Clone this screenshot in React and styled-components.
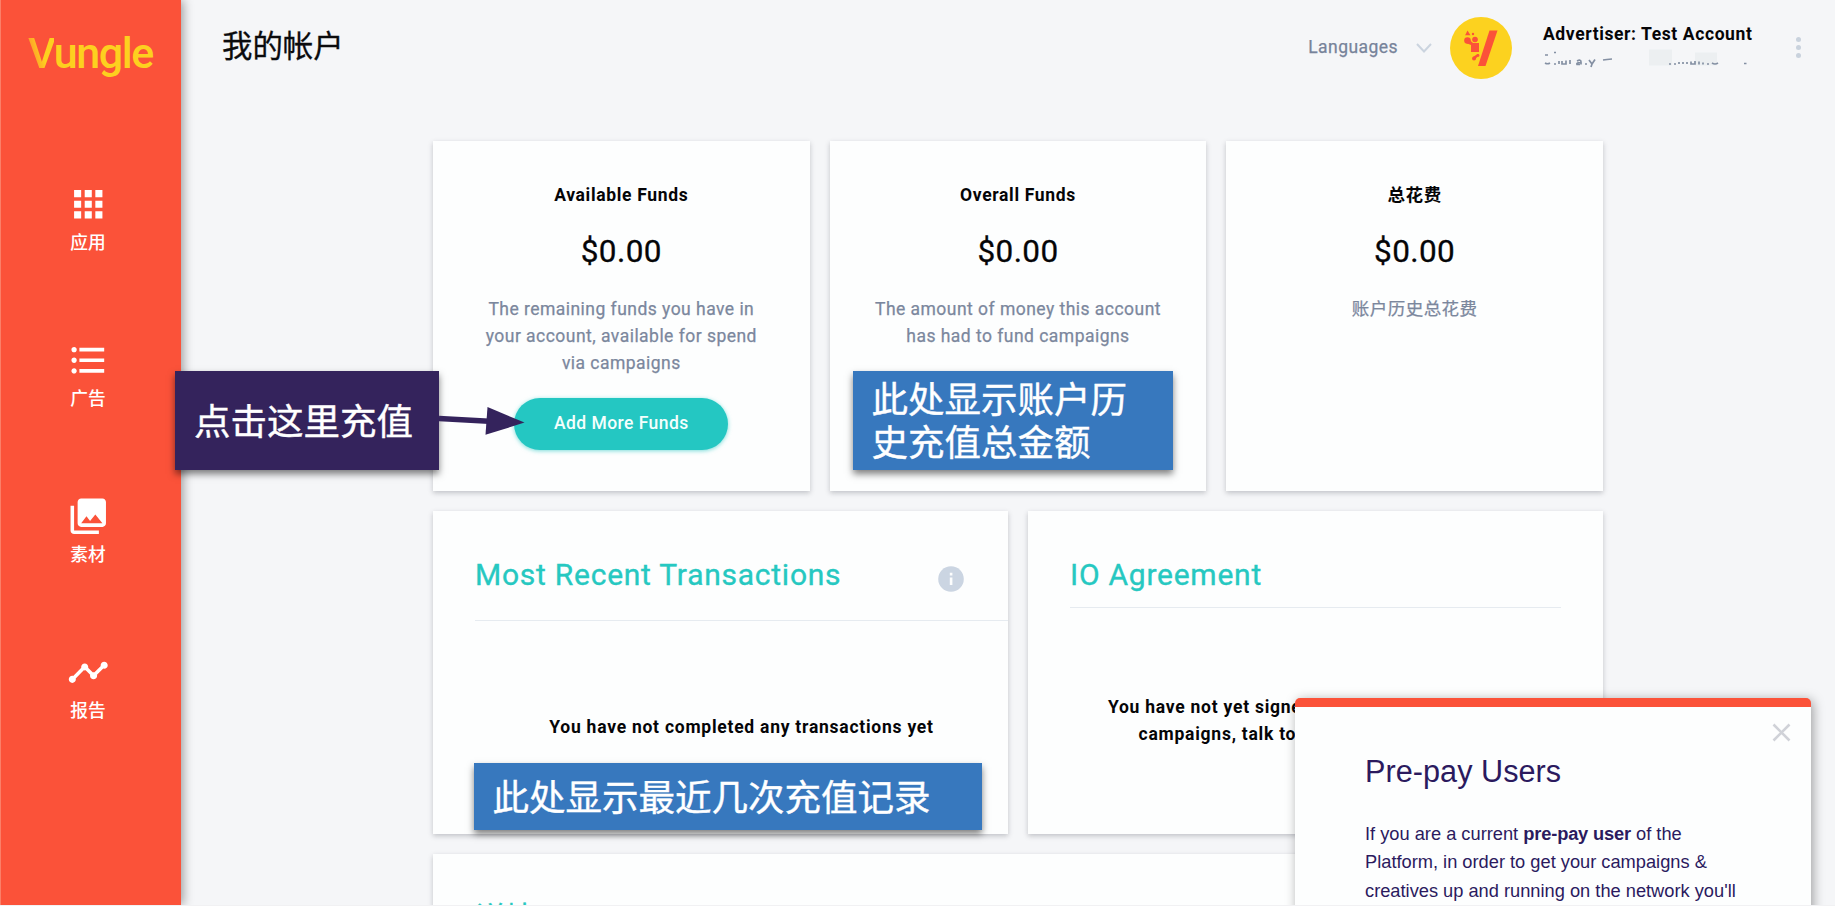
import React from 'react';
import styled, { createGlobalStyle } from 'styled-components';
import { MdApps, MdFormatListBulleted, MdCollections, MdTimeline } from 'react-icons/md';

const GlobalStyle = createGlobalStyle`
  * { box-sizing: border-box; }
  body {
    margin: 0;
    background: #f1f1f3;
    font-family: Roboto, "Noto Sans CJK SC", sans-serif;
    overflow: hidden;
  }
  h1, h2, h3, p { margin: 0; font-weight: 400; }
`;

const Shell = styled.div`
  position: relative;
  display: flex;
  width: 1835px;
  height: 905px;
  overflow: hidden;
  background: #f5f6f8;
`;

const Sidebar = styled.aside`
  flex: none;
  width: 181px;
  padding: 30px 6px 0 0;
  border-left: 1px solid #fb7f68;
  background: #fb5239;
  box-shadow: 2px 0 10px rgba(0, 0, 0, 0.38);
  z-index: 1;
`;

const Brand = styled.div`
  height: 50px;
  padding-left: 27px;
  font-weight: 500;
  font-size: 43px;
  line-height: 47px;
  letter-spacing: -1.4px;
  color: #fdd01f;
`;

const BrandInitial = styled.span`
  background: linear-gradient(75deg, #fd8f2c 15%, #fdd01f 55%);
  background-clip: text;
  color: transparent;
`;

const Nav = styled.nav`
  display: flex;
  flex-direction: column;
  gap: 86px;
  margin-top: 103px;
`;

const NavItem = styled.a`
  display: flex;
  flex-direction: column;
  align-items: center;
  height: 70px;
  font-weight: 500;
  font-size: 17.7px;
  line-height: 26px;
  color: #fff;
  svg { width: 42.5px; height: 42.5px; flex: none; margin-bottom: 4px; }
`;

const Main = styled.main`
  flex: 1;
  min-width: 0;
`;

const TopBar = styled.header`
  display: flex;
  align-items: flex-start;
  height: 141px;
  padding: 17px 34px 0 41px;
`;

const PageTitle = styled.h1`
  flex: 1;
  padding-top: 7px;
  font-size: 30.4px;
  line-height: 46px;
  -webkit-text-stroke: 0.3px currentColor;
  color: #0b0b0d;
`;

const Languages = styled.div`
  display: flex;
  align-items: center;
  gap: 18px;
  margin-right: 18px;
  font-size: 17.5px;
  line-height: 27px;
  letter-spacing: 0.45px;
  padding-top: 17px;
  -webkit-text-stroke: 0.25px currentColor;
  color: #77839a;
`;

const Avatar = styled.svg`
  width: 62px;
  height: 62px;
  margin-right: 31px;
`;

const Account = styled.div`
  width: 253px;
  font-weight: 700;
  font-size: 17.5px;
  line-height: 27px;
  letter-spacing: 0.6px;
  padding-top: 4px;
  color: #050507;
  svg { display: block; }
`;

const Dots = styled.div`
  display: flex;
  flex-direction: column;
  gap: 3px;
  padding-top: 20px;
  margin-left: auto;
`;

const Dot = styled.i`
  width: 5px;
  height: 5px;
  border-radius: 50%;
  background: #c9d2dd;
`;

const Content = styled.div`
  display: flex;
  flex-direction: column;
  gap: 20px;
  width: 1170px;
  margin-left: 252px;
`;

const Row = styled.div`
  display: grid;
  grid-template-columns: repeat(${(p) => p.$columns}, 1fr);
  gap: 20px;
  height: ${(p) => p.$height}px;
`;

const Card = styled.section`
  background: #fdfefe;
  box-shadow: 0 2px 5px rgba(40, 45, 55, 0.25);
`;

const FundCard = styled(Card)`
  display: flex;
  flex-direction: column;
  align-items: center;
  padding-top: 41px;
  text-align: center;
`;

const FundTitle = styled.h3`
  font-weight: 700;
  font-size: 17.5px;
  line-height: 27px;
  letter-spacing: 0.68px;
  color: #050507;
`;

const Amount = styled.div`
  margin-top: 25px;
  font-size: 31.5px;
  line-height: 36px;
  letter-spacing: 0.4px;
  -webkit-text-stroke: 0.3px currentColor;
  color: #050507;
`;

const FundText = styled.p`
  width: 290px;
  margin-top: 26px;
  font-size: 17.5px;
  line-height: 27.2px;
  letter-spacing: 0.47px;
  -webkit-text-stroke: 0.25px currentColor;
  color: #7b879d;
`;

const Button = styled.button`
  width: 214px;
  height: 52px;
  margin-top: 20px;
  padding: 0 0 2px;
  border: 0;
  border-radius: 26px;
  background: #24c7c2;
  box-shadow: 0 1px 4px rgba(36, 199, 194, 0.6);
  font: 500 17.5px Roboto, sans-serif;
  letter-spacing: 0.45px;
  color: #f4fffd;
`;

const Panel = styled(Card)`
  padding: 46px ${(p) => p.$right || 0}px 0 42px;
`;

const PanelHeader = styled.div`
  display: flex;
  justify-content: space-between;
  padding: 0 ${(p) => p.$right || 0}px ${(p) => p.$bottom}px 0;
  border-bottom: 1px solid #e6ebf0;
`;

const PanelTitle = styled.h2`
  font-size: 30px;
  line-height: 36px;
  letter-spacing: 0.75px;
  -webkit-text-stroke: 0.35px currentColor;
  color: #26c8c1;
`;

const InfoIcon = styled.svg`
  width: 26px;
  height: 26px;
  margin-top: 9px;
`;

const Message = styled.p`
  margin-top: ${(p) => p.$top}px;
  font-weight: 700;
  font-size: 17.5px;
  line-height: 27px;
  letter-spacing: 0.75px;
  text-align: center;
  color: #050507;
`;

const Callout = styled.div`
  position: absolute;
  left: ${(p) => p.$x}px;
  top: ${(p) => p.$y}px;
  width: ${(p) => p.$w}px;
  height: ${(p) => p.$h}px;
  display: flex;
  align-items: center;
  padding: 3px 0 0 19px;
  background: ${(p) => p.$color};
  box-shadow: 0 4px 7px rgba(0, 0, 0, 0.5);
  font-size: 36.5px;
  line-height: 43px;
  -webkit-text-stroke: 0.4px currentColor;
  color: #fff;
  z-index: 2;
`;

const Arrow = styled.svg`
  position: absolute;
  left: 439px;
  top: 405px;
  width: 88px;
  height: 32px;
  z-index: 3;
`;

const Popup = styled.div`
  position: absolute;
  left: 1295px;
  top: 698px;
  width: 516px;
  height: 300px;
  padding: 46px 60px 0 70px;
  border-top: 9px solid #fb5239;
  border-radius: 5px 5px 0 0;
  background: #fdfefe;
  box-shadow: 2px 2px 12px rgba(0, 0, 0, 0.36);
  font-family: "Liberation Sans", Arial, sans-serif;
  color: #2b1a5e;
  z-index: 4;
`;

const PopupTitle = styled.h2`
  font-size: 30.6px;
  line-height: 36px;
  letter-spacing: 0.05px;
`;

const PopupText = styled.p`
  margin-top: 31px;
  font-size: 18.25px;
  line-height: 28.4px;
  white-space: nowrap;
  b { letter-spacing: -0.15px; }
`;

const Close = styled.svg`
  position: absolute;
  right: 20px;
  top: 16px;
  width: 19px;
  height: 19px;
`;

const navItems = [
  { label: '应用', Icon: MdApps },
  { label: '广告', Icon: MdFormatListBulleted },
  { label: '素材', Icon: MdCollections },
  { label: '报告', Icon: MdTimeline },
];

function AvatarMark() {
  return (
    <Avatar viewBox="0 0 62 62">
      <circle cx="31" cy="31" r="31" fill="#fcd21f" />
      <g fill="#fb5239">
        <path d="M39.500 13.500h8L35.500 49h-7.500z" />
        <path d="M17.500 13.500l3 4.800h-5.400z" />
        <circle cx="23" cy="17" r="1.200" />
        <circle cx="17.500" cy="23.500" r="3.300" />
        <circle cx="25" cy="22.500" r="2.800" />
        <path d="M18 21.500l5 4.500h6V35h-8v-7l-5-2z" />
        <circle cx="28" cy="38.500" r="1.400" />
        <circle cx="24" cy="41.500" r="2" />
        <path d="M23 40l4.500-3 1 1.500-3.500 4z" />
      </g>
    </Avatar>
  );
}

function RedactedEmail() {
  return (
    <svg width="230" height="24" viewBox="0 1.5 230 24">
      <g fill="#eceff1">
        <path d="M106 3h23v16h-23zM152 6h22v13h-22z" />
      </g>
      <g fill="none" stroke="#8490a3" strokeWidth="1.700">
        <path d="M2 16.500q2.500 1.500 5 0M11 17.500h2M16 17.500v-3M19 14.500v3h4v-3.500M27 17.500v-4M34 14.500q4-2 4 1v2.500M38 16q-5 0-4 2h3M42 17.500h2M46 13.500l3 4 3-4.500M49 17.500l-1 3M11 6h2M2 8.500h3M60 13.500l4-.5 5-.500" />
        <path d="M126 17.500h2M131 17.500h2M136 17.500v-2M140 17.500v-2M144 17.500v-2M148 15v2.500h4v-3M156 18v-3M160 18v-2M164 17.500h2M169 16.500q3 2 6 0M201 17h2.500" />
      </g>
    </svg>
  );
}

export default function App() {
  return (
    <>
      <GlobalStyle />
      <Shell>
        <Sidebar>
          <Brand><BrandInitial>V</BrandInitial>ungle</Brand>
          <Nav>
            {navItems.map(({ label, Icon }) => (
              <NavItem key={label}>
                <Icon />
                {label}
              </NavItem>
            ))}
          </Nav>
        </Sidebar>

        <Main>
          <TopBar>
            <PageTitle>我的帐户</PageTitle>
            <Languages>
              Languages
              <svg width="16" height="10" viewBox="0 0 16 10" fill="none" stroke="#cbd4df" strokeWidth="2">
                <path d="M1 1l7 7.500L15 1" />
              </svg>
            </Languages>
            <AvatarMark />
            <Account>
              Advertiser: Test Account
              <RedactedEmail />
            </Account>
            <Dots><Dot /><Dot /><Dot /></Dots>
          </TopBar>

          <Content>
            <Row $columns={3} $height={350}>
              <FundCard>
                <FundTitle>Available Funds</FundTitle>
                <Amount>$0.00</Amount>
                <FundText>The remaining funds you have in your account, available for spend via campaigns</FundText>
                <Button>Add More Funds</Button>
              </FundCard>
              <FundCard>
                <FundTitle>Overall Funds</FundTitle>
                <Amount>$0.00</Amount>
                <FundText>The amount of money this account has had to fund campaigns</FundText>
              </FundCard>
              <FundCard>
                <FundTitle>总花费</FundTitle>
                <Amount>$0.00</Amount>
                <FundText>账户历史总花费</FundText>
              </FundCard>
            </Row>

            <Row $columns={2} $height={323}>
              <Panel>
                <PanelHeader $bottom={27} $right={44}>
                  <PanelTitle>Most Recent Transactions</PanelTitle>
                  <InfoIcon viewBox="0 0 26 26">
                    <circle cx="13" cy="13" r="12.800" fill="#cbd5e2" />
                    <path d="M11.800 11.500h2.600v7.500h-2.600zM11.800 6.800h2.600v2.600h-2.600z" fill="#fdfefe" />
                  </InfoIcon>
                </PanelHeader>
                <Message $top={93}>You have not completed any transactions yet</Message>
              </Panel>
              <Panel $right={42}>
                <PanelHeader $bottom={14}>
                  <PanelTitle>IO Agreement</PanelTitle>
                </PanelHeader>
                <Message $top={86}>
                  You have not yet signed an IO. In order to launch
                  <br />
                  campaigns, talk to your account manager
                </Message>
              </Panel>
            </Row>

            <Row $columns={1} $height={200}>
              <Panel $right={42}>
                <PanelTitle>详情</PanelTitle>
              </Panel>
            </Row>
          </Content>
        </Main>

        <Callout $x={175} $y={371} $w={264} $h={99} $color="#34235c">点击这里充值</Callout>
        <Arrow viewBox="0 0 88 32">
          <path d="M0 13.500L50 16.300" stroke="#34235c" strokeWidth="5.500" />
          <path d="M48.500 2L85.500 17.600L46.500 29.800z" fill="#34235c" />
        </Arrow>
        <Callout $x={852.5} $y={371} $w={320} $h={99} $color="#3778be">
          此处显示账户历
          <br />
          史充值总金额
        </Callout>
        <Callout $x={473.5} $y={763} $w={508} $h={67} $color="#3778be">此处显示最近几次充值记录</Callout>

        <Popup>
          <Close viewBox="0 0 19 19" fill="none" stroke="#d0d2d8" strokeWidth="2.600">
            <path d="M1.500 1.500l16 16M17.500 1.500l-16 16" />
          </Close>
          <PopupTitle>Pre-pay Users</PopupTitle>
          <PopupText>
            If you are a current <b>pre-pay user</b> of the
            <br />
            Platform, in order to get your campaigns &amp;
            <br />
            creatives up and running on the network you'll
          </PopupText>
        </Popup>
      </Shell>
    </>
  );
}
